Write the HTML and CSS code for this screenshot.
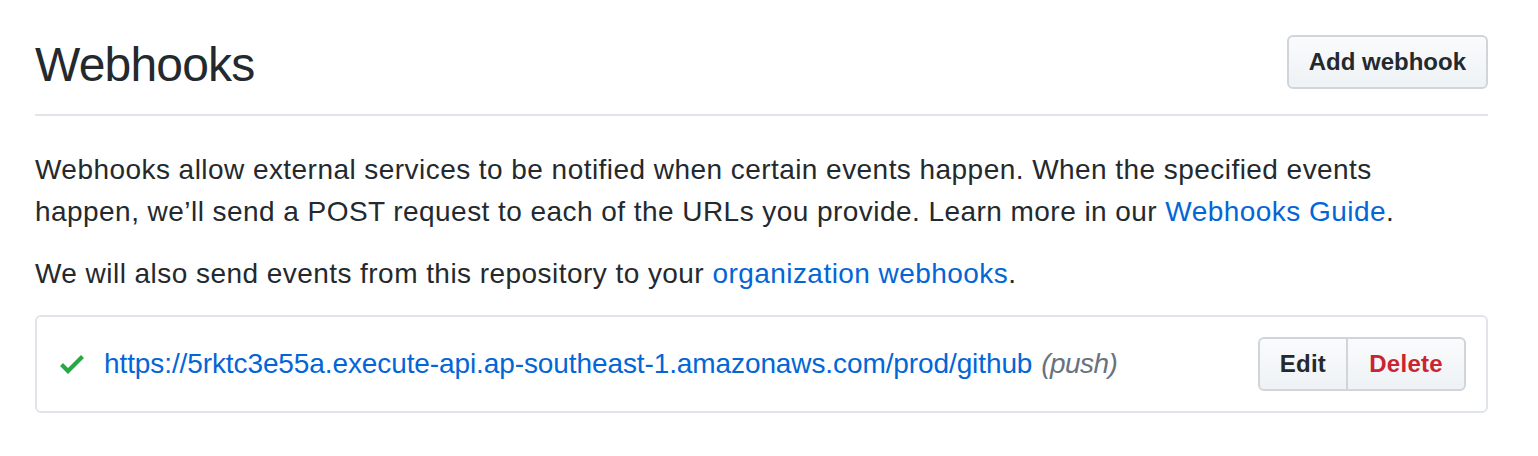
FILE: index.html
```html
<!DOCTYPE html>
<html lang="en">
<head>
<meta charset="utf-8">
<title>Webhooks</title>
<link rel="stylesheet" href="styles.css">
</head>
<body>
<div class="page">
  <div class="subhead">
    <h2 class="subhead-heading">Webhooks</h2>
    <div class="subhead-actions">
      <a class="btn" href="#">Add webhook</a>
    </div>
  </div>
  <p class="lead">Webhooks allow external services to be notified when certain events happen. When the specified events happen, we’ll send a POST request to each of the URLs you provide. Learn more in our <a href="#">Webhooks Guide</a>.</p>
  <p class="lead">We will also send events from this repository to your <a href="#">organization webhooks</a>.</p>
  <div class="hook-list">
    <div class="hook-item">
      <div class="hook-info">
        <svg class="check" width="24" height="32" viewBox="0 0 12 16" aria-hidden="true"><path fill-rule="evenodd" d="M12 5l-8 8-4-4 1.5-1.5L4 10l6.5-6.5L12 5z"/></svg>
        <a class="hook-url" href="#">https://5rktc3e55a.execute-api.ap-southeast-1.amazonaws.com/prod/github</a>
        <em class="hook-events">(push)</em>
      </div>
      <div class="btn-group">
        <a class="btn btn-group-item" href="#">Edit</a>
        <a class="btn btn-group-item btn-danger" href="#">Delete</a>
      </div>
    </div>
  </div>
</div>
</body>
</html>
```
FILE: styles.css
```css
* { box-sizing: border-box; }
html, body { margin: 0; padding: 0; background: #fff; }
body {
  font-family: "Liberation Sans", Arial, sans-serif;
  font-size: 28px;
  line-height: 42px;
  color: #24292e;
}
a { color: #0366d6; text-decoration: none; }
.page { padding: 35px 50px 0 35px; }
.subhead {
  display: flex;
  align-items: flex-start;
  padding-bottom: 19px;
  margin-bottom: 33px;
  border-bottom: 2px solid #e1e4e8;
}
.subhead-heading {
  flex: 1 1 auto;
  margin: 0;
  font-size: 48px;
  line-height: 60px;
  font-weight: 400;
  letter-spacing: -0.8px;
}
.subhead-actions { flex: none; }
.btn {
  display: inline-flex;
  align-items: center;
  height: 54px;
  padding: 0 20px;
  font-size: 24px;
  font-weight: 700;
  line-height: 40px;
  color: #24292e;
  background-image: linear-gradient(-180deg, #fafbfc 0%, #eff3f6 90%);
  border: 2px solid #d1d5da;
  border-radius: 6px;
  white-space: nowrap;
}
.lead { margin: 0 0 20px; padding-right: 16px; letter-spacing: 0.45px; }
.hook-list {
  border: 2px solid #e1e4e8;
  border-radius: 6px;
}
.hook-item {
  display: flex;
  align-items: center;
  justify-content: space-between;
  padding: 20px;
}
.hook-info { display: flex; align-items: center; }
.check { fill: #28a745; margin: 0 20px 0 3px; }
.hook-url { margin-right: 9px; letter-spacing: -0.1px; }
.hook-events { color: #6a737d; font-style: italic; letter-spacing: -0.6px; }
.btn-group { display: flex; }
.btn-group-item { border-radius: 0; letter-spacing: 0.3px; }
.btn-group-item:first-child { border-radius: 6px 0 0 6px; padding: 0 20px; }
.btn-group-item:last-child { border-radius: 0 6px 6px 0; margin-left: -2px; padding: 0 21px; }
.btn-danger { color: #cb2431; }
```
